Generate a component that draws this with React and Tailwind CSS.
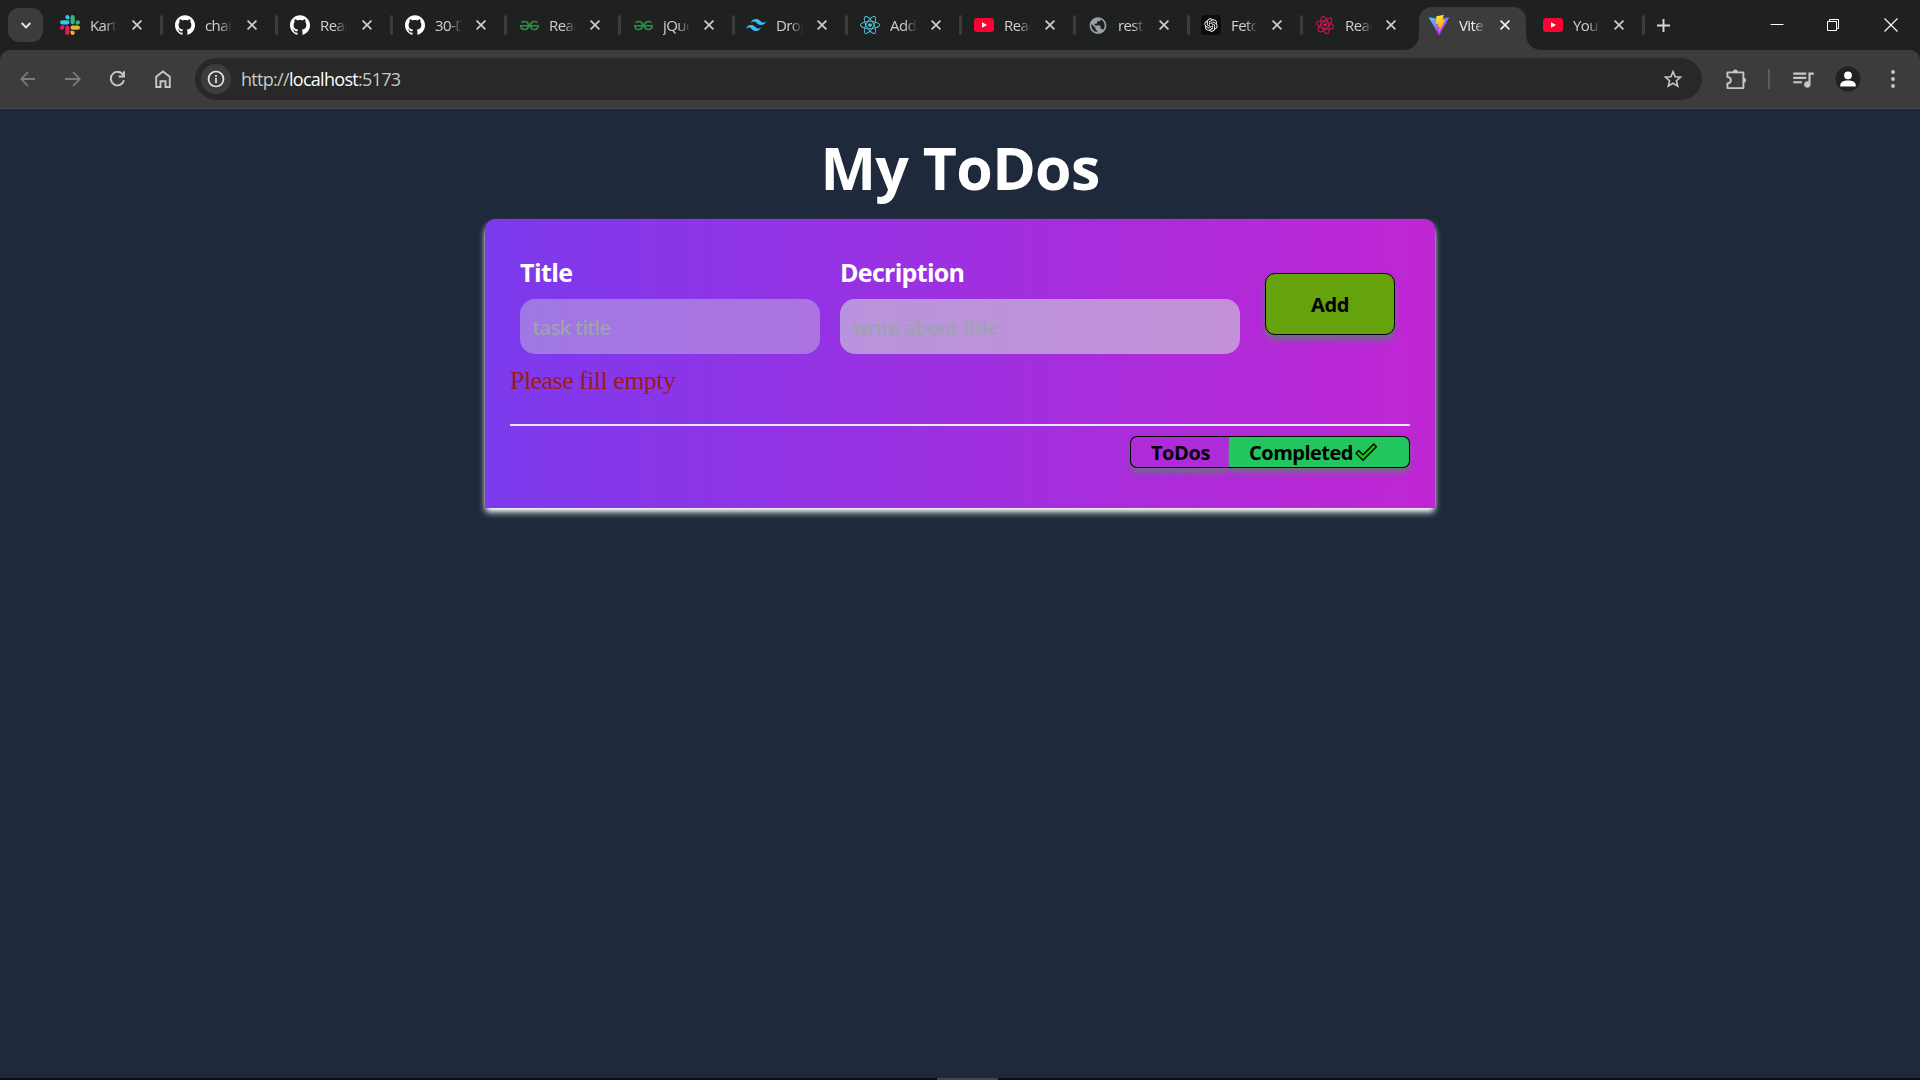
import React from "react";
import { SiGeeksforgeeks, SiTailwindcss, SiReact, SiGithub } from "react-icons/si";
import { RiOpenaiFill } from "react-icons/ri";
import { MdPublic, MdQueueMusic } from "react-icons/md";

const SLACK_PART =
  "M5.042 15.165a2.528 2.528 0 0 1-2.52 2.523A2.528 2.528 0 0 1 0 15.165a2.527 2.527 0 0 1 2.522-2.52h2.52v2.52zM6.313 15.165a2.527 2.527 0 0 1 2.521-2.52 2.527 2.527 0 0 1 2.521 2.52v6.313A2.528 2.528 0 0 1 8.834 24a2.528 2.528 0 0 1-2.521-2.522v-6.313z";

function Slack() {
  return (
    <svg viewBox="0 0 24 24" className="size-5">
      <path d={SLACK_PART} fill="#e01e5a" />
      <path d={SLACK_PART} fill="#36c5f0" transform="rotate(90 12 12)" />
      <path d={SLACK_PART} fill="#2eb67d" transform="rotate(180 12 12)" />
      <path d={SLACK_PART} fill="#ecb22e" transform="rotate(270 12 12)" />
    </svg>
  );
}

function Youtube() {
  return (
    <svg viewBox="0 0 20 20" className="size-5">
      <rect x="0" y="3" width="20" height="14" rx="3.2" fill="#ff0033" />
      <path d="M8 7.2v5.6l5-2.8z" fill="#fff" />
    </svg>
  );
}

function Openai() {
  return (
    <span className="flex size-5 items-center justify-center rounded bg-[#0d0d0d]">
      <RiOpenaiFill className="size-4 text-white" />
    </span>
  );
}

function RedAtom() {
  return (
    <svg viewBox="0 0 20 20" className="size-5" fill="none" stroke="#d3165a" strokeWidth="1">
      <g transform="rotate(15 10 10)">
        <ellipse cx="10" cy="10" rx="9" ry="3.6" />
        <ellipse cx="10" cy="10" rx="9" ry="3.6" transform="rotate(60 10 10)" />
        <ellipse cx="10" cy="10" rx="9" ry="3.6" transform="rotate(120 10 10)" />
      </g>
      <path d="M10 12 8 9.8a1.1 1.1 0 0 1 2-1 1.1 1.1 0 0 1 2 1z" fill="#d3165a" stroke="none" />
    </svg>
  );
}

function Vite() {
  return (
    <svg viewBox="0 0 256 257" className="size-5">
      <defs>
        <linearGradient id="vite-a" x1="-.8%" x2="57.6%" y1="7.7%" y2="78.4%">
          <stop offset="0%" stopColor="#41D1FF" />
          <stop offset="100%" stopColor="#BD34FE" />
        </linearGradient>
        <linearGradient id="vite-b" x1="43.4%" x2="50.3%" y1="2.2%" y2="89%">
          <stop offset="0%" stopColor="#FFEA83" />
          <stop offset="8.3%" stopColor="#FFDD35" />
          <stop offset="100%" stopColor="#FFA800" />
        </linearGradient>
      </defs>
      <path fill="url(#vite-a)" d="M255.153 37.938L134.897 252.976c-2.483 4.44-8.862 4.466-11.382.048L.875 37.958c-2.746-4.814 1.371-10.646 6.827-9.67l120.385 21.517a6.537 6.537 0 0 0 2.322-.004l117.867-21.483c5.438-.991 9.574 4.796 6.877 9.62Z" />
      <path fill="url(#vite-b)" d="M185.432.063L96.44 17.501a3.268 3.268 0 0 0-2.634 3.014l-5.474 92.456a3.268 3.268 0 0 0 3.997 3.378l24.777-5.718c2.318-.535 4.413 1.507 3.936 3.838l-7.361 36.047c-.495 2.426 1.782 4.5 4.151 3.78l15.304-4.649c2.372-.72 4.652 1.36 4.15 3.788l-11.698 56.621c-.732 3.542 3.979 5.473 5.943 2.437l1.313-2.028l72.516-144.72c1.215-2.423-.88-5.186-3.54-4.672l-25.505 4.922c-2.396.462-4.435-1.77-3.759-4.114l16.646-57.705c.677-2.35-1.37-4.583-3.769-4.113Z" />
    </svg>
  );
}

const github = <SiGithub className="size-5 text-white" />;
const geeks = <SiGeeksforgeeks className="size-[19px] text-[#2f8d46]" />;
const youtube = <Youtube />;

const TABS = [
  { title: "Kart", icon: <Slack />, width: "w-[115px]", wide: true },
  { title: "chai", icon: github, width: "w-[115px]", wide: true },
  { title: "Reac", icon: github, width: "w-[115px]", wide: true },
  { title: "30-D", icon: github, width: "w-[114px]" },
  { title: "Reac", icon: geeks, width: "w-[114px]" },
  { title: "jQue", icon: geeks, width: "w-[113px]" },
  { title: "Drop", icon: <SiTailwindcss className="size-5 text-[#38bdf8]" />, width: "w-[114px]" },
  { title: "Add", icon: <SiReact className="size-5 text-[#58c4dc]" />, width: "w-[114px]" },
  { title: "Reac", icon: youtube, width: "w-[114px]" },
  { title: "resto", icon: <MdPublic className="size-[21px] text-[#9aa0a6]" />, width: "w-[113px]" },
  { title: "Fetc", icon: <Openai />, width: "w-[114px]" },
  { title: "Reac", icon: <RedAtom />, width: "w-[114px]", bare: true },
  { title: "Vite", icon: <Vite />, width: "w-[114px]", active: true, bare: true },
  { title: "YouT", icon: youtube, width: "w-[102px]" },
];

function ActiveShape() {
  return (
    <span className="absolute -left-[25px] bottom-0 flex h-[43px] items-end">
      <span className="size-[15px] bg-[radial-gradient(circle_at_0_0,transparent_14.5px,#3c3c3c_15.5px)]" />
      <span className="h-[43px] w-[107px] rounded-t-[13px] bg-[#3c3c3c]" />
      <span className="size-[15px] bg-[radial-gradient(circle_at_100%_0,transparent_14.5px,#3c3c3c_15.5px)]" />
    </span>
  );
}

function Tab({ title, icon, width, active, bare, wide }) {
  return (
    <div className={`relative h-full shrink-0 ${width}`}>
      {active && <ActiveShape />}
      <div className="relative flex h-full items-center">
        <span className="flex w-5 shrink-0 justify-center">{icon}</span>
        <span
          className={`ml-[10px] mt-[1px] w-[27px] overflow-hidden whitespace-nowrap text-[15px] tracking-[-0.6px] [mask-image:linear-gradient(to_right,black_55%,transparent)] ${active ? "text-[#e8e8e8]" : "text-[#cfcfcf]"}`}
        >
          {title}
        </span>
        <svg
          viewBox="0 0 10 10"
          className={`size-[10px] shrink-0 ${wide ? "ml-[15px]" : "ml-[14px]"}`}
          fill="none"
          stroke={active ? "#f0f0f0" : "#cfcfcf"}
          strokeWidth="1.7"
        >
          <path d="M.6.6l8.8 8.8M9.4.6L.6 9.4" />
        </svg>
        {!bare && <span className="ml-[18px] h-5 w-[3px] rounded-full bg-[#3c3c3c]" />}
      </div>
    </div>
  );
}

function TabStrip() {
  return (
    <div className="flex h-[50px] items-center bg-[#1f2120]">
      <button className="ml-2 flex h-[34px] w-[35px] shrink-0 items-center justify-center rounded-[11px] bg-[#3c3c3c]">
        <svg viewBox="0 0 10 7" className="h-[7px] w-[10px]" fill="none" stroke="#e8e8e8" strokeWidth="1.9">
          <path d="M.7 1 5 5.3 9.3 1" />
        </svg>
      </button>
      <div className="ml-[17px] flex h-full">
        {TABS.map((tab, i) => (
          <Tab key={i} {...tab} />
        ))}
      </div>
      <svg viewBox="0 0 13 13" className="ml-[12px] size-[13px] shrink-0" fill="none" stroke="#d8d8d8" strokeWidth="1.9">
        <path d="M6.5 0v13M0 6.5h13" />
      </svg>
      <div className="ml-[100px] flex items-center">
        <svg viewBox="0 0 14 14" className="size-[14px]" stroke="#fff" strokeWidth="1">
          <path d="M.5 6.5h13" />
        </svg>
        <svg viewBox="0 0 14 14" className="ml-[42px] size-[14px]" fill="none" stroke="#fff" strokeWidth="1">
          <path d="M1.500 3.500h9v9h-9zM3.500 3.500v-2h9v9h-2" />
        </svg>
        <svg viewBox="0 0 14 14" className="ml-[44px] size-[14px]" stroke="#fff" strokeWidth="1.1">
          <path d="M.5.500l13 13M13.500.500l-13 13" />
        </svg>
      </div>
    </div>
  );
}

function Toolbar() {
  return (
    <div className="bg-[#1f2120]">
      <div className="flex h-[59px] items-center rounded-t-[10px] border-b border-[#4a4a4a] bg-[#3c3c3c]">
        <svg viewBox="0 0 16 16" className="ml-5 size-4 shrink-0" fill="none" stroke="#7c7c7c" strokeWidth="1.8">
          <path d="M15 8H1.500M8 1 1.300 8 8 15" />
        </svg>
        <svg viewBox="0 0 16 16" className="ml-[29px] size-4 shrink-0" fill="none" stroke="#7c7c7c" strokeWidth="1.8">
          <path d="M0 8h14.500M8 1l6.700 7L8 15" />
        </svg>
        <svg viewBox="0 0 16 16" className="ml-[28px] size-4 shrink-0" fill="none" stroke="#c7c7c7" strokeWidth="1.9">
          <path d="M14.600 4.800A6.700 6.700 0 1 0 15 9.300" />
          <path d="M15 .3v5.200H9.600" />
        </svg>
        <svg viewBox="0 0 16 18" className="ml-[29.5px] h-[18px] w-4 shrink-0" fill="none" stroke="#c7c7c7" strokeWidth="1.9">
          <path d="M1.200 6.700 8 1.400l6.800 5.300V17h-4.300v-5.700h-5V17H1.200z" />
        </svg>
        <div className="ml-[24.5px] flex h-[42px] w-[1507px] shrink-0 items-center rounded-full bg-[#282828] pl-[6px]">
          <span className="flex size-[30px] items-center justify-center rounded-full bg-[#3c3c3c]">
            <svg viewBox="0 0 18 18" className="size-[18px]" fill="none" stroke="#e3e3e3" strokeWidth="1.7">
              <circle cx="9" cy="9" r="7.500" />
              <path d="M9 8v5M9 5v1.900" />
            </svg>
          </span>
          <span className="ml-[10px] text-[18px] tracking-[-0.7px] text-[#c7c7c7]">
            http://<span className="text-white">localhost</span>:5173
          </span>
          <svg viewBox="0 0 20 20" className="ml-auto mr-[19px] size-5" fill="none" stroke="#c7c7c7" strokeWidth="1.600">
            <path d="M10 2.600l2.100 5.100 5.500.4-4.200 3.600 1.300 5.400-4.700-2.900-4.700 2.900 1.300-5.400L2.400 8.100l5.500-.4z" />
          </svg>
        </div>
        <svg viewBox="0 0 22 22" className="ml-[23px] size-[22px] shrink-0">
          <path d="M2.400 4.400h16v15.700H2.400v-4.600c4.600-.6 4.600-6 0-6.600z" fill="none" stroke="#c7c7c7" strokeWidth="1.900" strokeLinejoin="round" />
          <path d="M7.800 4a2.500 2.500 0 0 1 5 0zM18.500 9.800a2.500 2.500 0 0 1 0 5z" fill="#c7c7c7" />
        </svg>
        <span className="ml-[21px] h-5 w-[2px] bg-[#5c5c5c]" />
        <MdQueueMusic className="ml-[20px] size-[26px] shrink-0 text-[#c7c7c7]" />
        <svg viewBox="0 0 26 26" className="ml-[19px] size-[26px] shrink-0">
          <circle cx="13" cy="13" r="12.500" fill="#1f2120" />
          <circle cx="13" cy="9.300" r="3.900" fill="#fff" />
          <path d="M5.300 20.500v-1.700c0-3 4-4.400 7.700-4.400s7.700 1.400 7.700 4.400v1.700z" fill="#fff" />
        </svg>
        <svg viewBox="0 0 4 18" className="ml-[30px] h-[18px] w-1 shrink-0" fill="#c7c7c7">
          <circle cx="2" cy="2" r="1.900" />
          <circle cx="2" cy="9" r="1.900" />
          <circle cx="2" cy="16" r="1.900" />
        </svg>
      </div>
    </div>
  );
}

function TodoCard() {
  return (
    <section className="mt-[10px] h-[289px] w-[950px] rounded-t-[10px] bg-[linear-gradient(to_right,#7c3aed,#c026d3)] px-[25px] shadow-[0_5px_7.5px_-1.25px_#fff,0_2.5px_5px_-2.5px_#fff]">
      <div className="flex pl-[10px] pt-[35px]">
        <label className="block w-[300px]">
          <span className="block h-[37px] text-[25px] font-bold leading-[37px] tracking-[-0.6px] text-white">Title</span>
          <input
            placeholder="task title"
            className="mt-[8px] block h-[55px] w-full rounded-[15px] bg-[#d1d5db]/40 px-[12.5px] pt-[2px] text-[20px] font-semibold tracking-[-0.65px] outline-none placeholder:text-[#9ca3af]"
          />
        </label>
        <label className="ml-5 block w-[400px]">
          <span className="block h-[37px] text-[25px] font-bold leading-[37px] tracking-[-0.7px] text-white">Decription</span>
          <input
            placeholder="write about title"
            className="mt-[8px] block h-[55px] w-full rounded-[15px] bg-[#d1d5db]/60 px-[12.5px] pt-[2px] text-[20px] font-semibold tracking-[-0.6px] outline-none placeholder:text-[#9ca3af]"
          />
        </label>
        <button className="ml-[25px] mt-[19px] h-[62px] w-[130px] rounded-[10px] border border-black bg-[#65a30d] pt-[2px] text-[20px] font-bold tracking-[-0.4px] text-black shadow-[0_5px_7.5px_-1.25px_#6b7280,0_2.5px_5px_-2.5px_#6b7280]">
          Add
        </button>
      </div>
      <p className="mt-[10px] h-[35px] font-['Liberation_Serif',serif] text-[26px] leading-[34px] tracking-[-0.55px] text-[#991b1b]">Please fill empty</p>
      <hr className="mt-[25px] h-[2px] border-0 bg-[#e5e7eb]" />
      <div className="mt-[10px] flex justify-end">
        <div className="flex h-8 w-[280px] text-[20px] font-bold leading-[31px] text-black">
          <button className="w-[99px] rounded-l-[7px] border border-r-0 border-black bg-[#af2bda] pl-[1px] tracking-[-0.4px] shadow-[0_5px_7.5px_-1.25px_#6b7280,0_2.5px_5px_-2.5px_#6b7280]">
            ToDos
          </button>
          <button className="flex w-[181px] items-center rounded-r-[7px] border border-l-0 border-black bg-[#22c55e] pl-5 tracking-[-0.5px] shadow-[0_5px_7.5px_-1.25px_#6b7280,0_2.5px_5px_-2.5px_#6b7280]">
            <span>Completed</span>
            <svg viewBox="0 0 22 18" className="ml-[2px] h-[18px] w-[22px]" fill="#16c60c" stroke="#000" strokeWidth="1.300" strokeLinejoin="round">
              <path d="M1 10.200 3.700 7.500 8 11.800 18.700 1 21.400 3.700 8 17.200z" />
            </svg>
          </button>
        </div>
      </div>
    </section>
  );
}

export default function App() {
  return (
    <div className="flex h-[1080px] w-[1920px] flex-col overflow-hidden bg-[#1e293b] font-['Open_Sans',sans-serif]">
      <TabStrip />
      <Toolbar />
      <main className="flex grow flex-col items-center">
        <h1 className="mt-[25px] h-[75px] whitespace-nowrap text-[59px] font-bold leading-[67px] tracking-[-0.7px] text-white">My ToDos</h1>
        <TodoCard />
      </main>
      <div className="flex h-[2px] justify-center bg-[#0b0d14]">
        <span className="mr-[-14px] w-[61px] bg-[#45444a]" />
      </div>
    </div>
  );
}
